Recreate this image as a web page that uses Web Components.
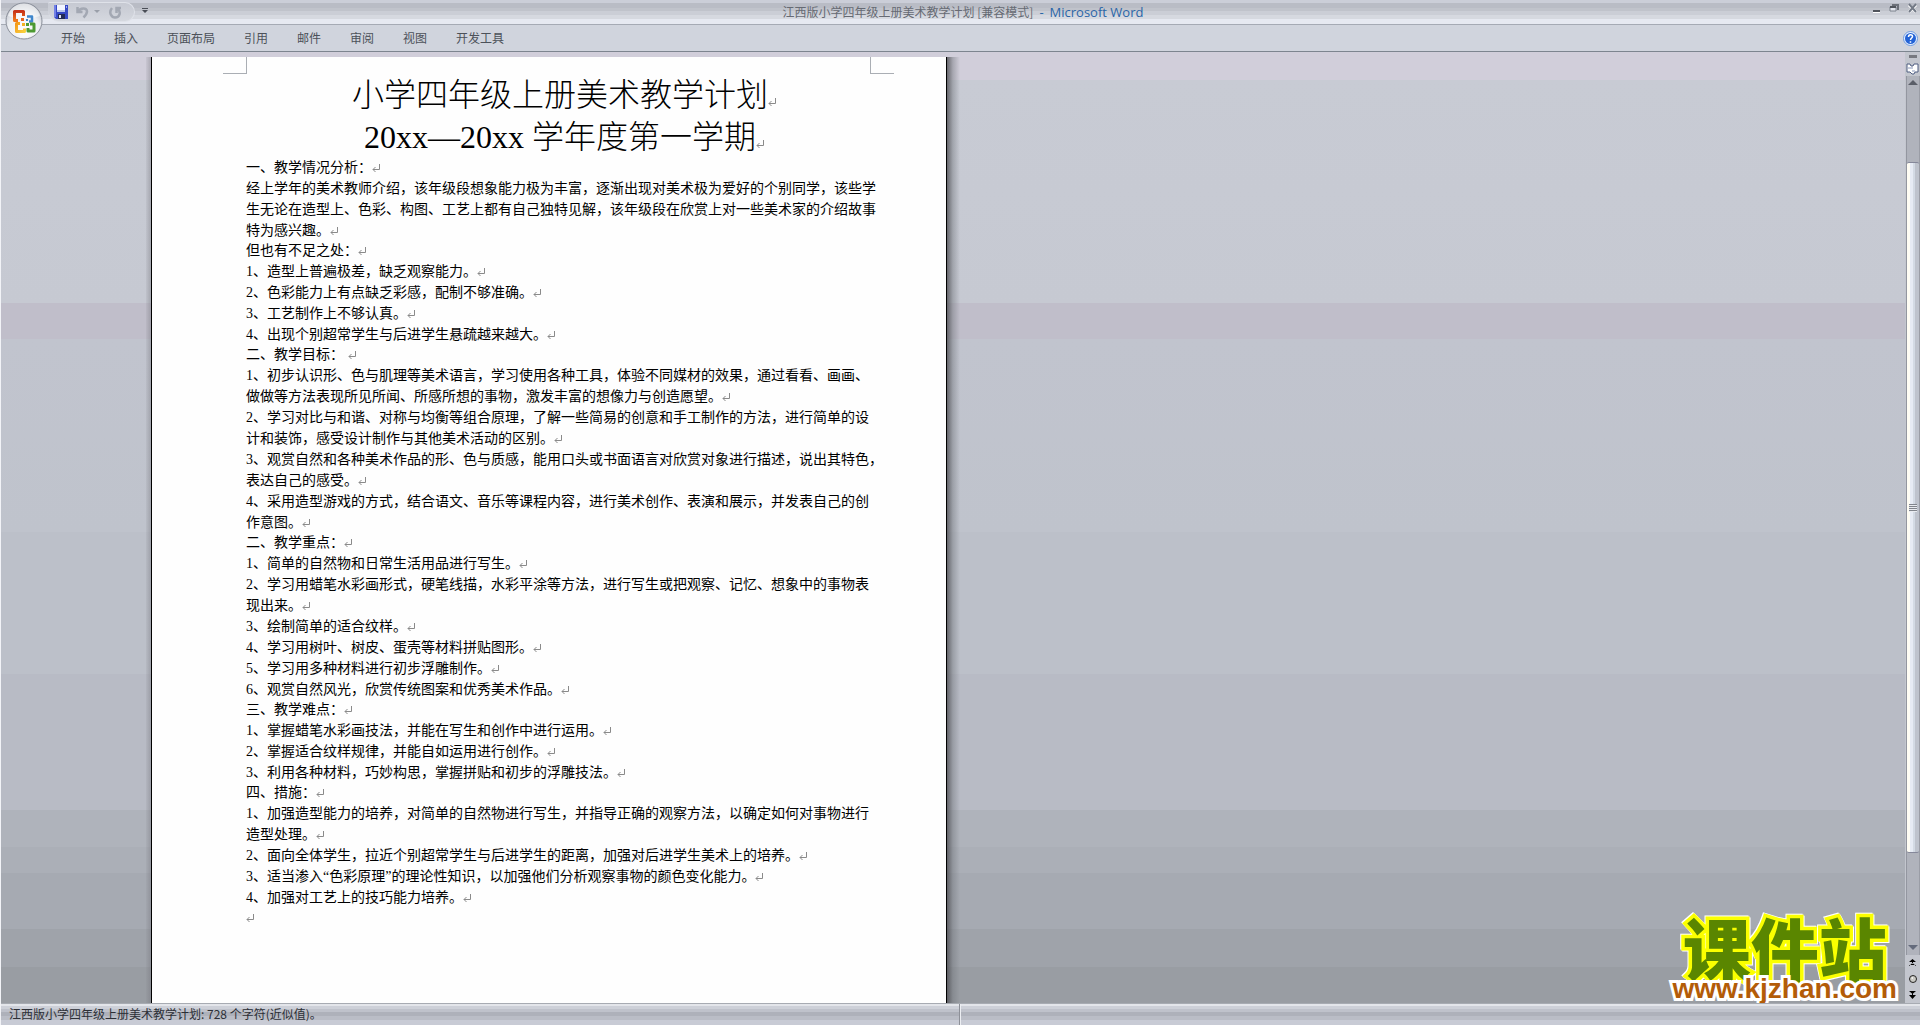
<!DOCTYPE html>
<html lang="zh-CN">
<head>
<meta charset="utf-8">
<title>江西版小学四年级上册美术教学计划 - Microsoft Word</title>
<style>
html, body { height: 100%; margin: 0; }
body { font-family: "Noto Sans CJK SC", sans-serif; overflow: hidden; }
</style>
</head>
<body>
<word-window>
  <word-titlebar slot="top">
    <span slot="doc">江西版小学四年级上册美术教学计划 [兼容模式]</span>
    <span slot="app">Microsoft Word</span>
  </word-titlebar>
  <word-ribbon slot="top">
    <ribbon-tab>开始</ribbon-tab>
    <ribbon-tab>插入</ribbon-tab>
    <ribbon-tab>页面布局</ribbon-tab>
    <ribbon-tab>引用</ribbon-tab>
    <ribbon-tab>邮件</ribbon-tab>
    <ribbon-tab>审阅</ribbon-tab>
    <ribbon-tab>视图</ribbon-tab>
    <ribbon-tab>开发工具</ribbon-tab>
  </word-ribbon>
  <word-page>
    <doc-para kind="title">小学四年级上册美术教学计划</doc-para>
    <doc-para kind="title">20xx—20xx 学年度第一学期</doc-para>
    <doc-para kind="head">一、教学情况分析：</doc-para>
    <doc-para>经上学年的美术教师介绍，该年级段想象能力极为丰富，逐渐出现对美术极为爱好的个别同学，该些学<br>生无论在造型上、色彩、构图、工艺上都有自己独特见解，该年级段在欣赏上对一些美术家的介绍故事<br>特为感兴趣。</doc-para>
    <doc-para kind="head">但也有不足之处：</doc-para>
    <doc-para>1、造型上普遍极差，缺乏观察能力。</doc-para>
    <doc-para>2、色彩能力上有点缺乏彩感，配制不够准确。</doc-para>
    <doc-para>3、工艺制作上不够认真。</doc-para>
    <doc-para>4、出现个别超常学生与后进学生悬疏越来越大。</doc-para>
    <doc-para kind="head">二、教学目标：&nbsp;</doc-para>
    <doc-para>1、初步认识形、色与肌理等美术语言，学习使用各种工具，体验不同媒材的效果，通过看看、画画、<br>做做等方法表现所见所闻、所感所想的事物，激发丰富的想像力与创造愿望。</doc-para>
    <doc-para>2、学习对比与和谐、对称与均衡等组合原理，了解一些简易的创意和手工制作的方法，进行简单的设<br>计和装饰，感受设计制作与其他美术活动的区别。</doc-para>
    <doc-para>3、观赏自然和各种美术作品的形、色与质感，能用口头或书面语言对欣赏对象进行描述，说出其特色，<br>表达自己的感受。</doc-para>
    <doc-para>4、采用造型游戏的方式，结合语文、音乐等课程内容，进行美术创作、表演和展示，并发表自己的创<br>作意图。</doc-para>
    <doc-para kind="head">二、教学重点：</doc-para>
    <doc-para>1、简单的自然物和日常生活用品进行写生。</doc-para>
    <doc-para>2、学习用蜡笔水彩画形式，硬笔线描，水彩平涂等方法，进行写生或把观察、记忆、想象中的事物表<br>现出来。</doc-para>
    <doc-para>3、绘制简单的适合纹样。</doc-para>
    <doc-para>4、学习用树叶、树皮、蛋壳等材料拼贴图形。</doc-para>
    <doc-para>5、学习用多种材料进行初步浮雕制作。</doc-para>
    <doc-para>6、观赏自然风光，欣赏传统图案和优秀美术作品。</doc-para>
    <doc-para kind="head">三、教学难点：</doc-para>
    <doc-para>1、掌握蜡笔水彩画技法，并能在写生和创作中进行运用。</doc-para>
    <doc-para>2、掌握适合纹样规律，并能自如运用进行创作。</doc-para>
    <doc-para>3、利用各种材料，巧妙构思，掌握拼贴和初步的浮雕技法。</doc-para>
    <doc-para kind="head">四、措施：</doc-para>
    <doc-para>1、加强造型能力的培养，对简单的自然物进行写生，并指导正确的观察方法，以确定如何对事物进行<br>造型处理。</doc-para>
    <doc-para>2、面向全体学生，拉近个别超常学生与后进学生的距离，加强对后进学生美术上的培养。</doc-para>
    <doc-para>3、适当渗入“色彩原理”的理论性知识，以加强他们分析观察事物的颜色变化能力。</doc-para>
    <doc-para>4、加强对工艺上的技巧能力培养。</doc-para>
    <doc-para kind="head"></doc-para>
  </word-page>
  <word-scrollbar slot="scroll"></word-scrollbar>
  <site-mark slot="mark"><span>课件站</span><span slot="url">www.kjzhan.com</span></site-mark>
  <word-status slot="bottom">江西版小学四年级上册美术教学计划: 728 个字符(近似值)。</word-status>
</word-window>

<script>
function define(name, html) {
  const t = document.createElement('template');
  t.innerHTML = html;
  customElements.define(name, class extends HTMLElement {
    constructor() {
      super();
      this.attachShadow({ mode: 'open' }).appendChild(t.content.cloneNode(true));
    }
  });
}

define('word-window', `
<style>
:host { display: flex; flex-direction: column; height: 100vh; box-sizing: border-box; border-left: 1px solid #f2f3f7; }
.work { flex: 1; min-height: 0; display: flex; position: relative; overflow: hidden;
  background: linear-gradient(#d1ceda 0 28px, #c8cbd4 28px, #c6c9d2 251px, #c0beca 251px 287px, #c1c4ce 287px, #bfc3cc 480px, #bcc0c9 480px 622px, #b8bbc5 622px 758px, #afb3bb 758px 795px, #abafb7 795px 821px, #a6aab2 821px 877px, #9fa3aa 877px 915px, #999da3 915px); }
.canvas { flex: 1; min-width: 0; display: flex; padding: 5px 0 0 150px; overflow: hidden; }
</style>
<slot name="top"></slot>
<main class="work"><div class="canvas"><slot></slot></div><slot name="scroll"></slot><slot name="mark"></slot></main>
<slot name="bottom"></slot>`);

define('word-titlebar', `
<style>
:host { display: grid; grid-template-columns: 1fr auto 1fr; height: 24px; border-bottom: 1px solid #a5aab4; position: relative; z-index: 2;
  background: linear-gradient(#cbced8 0 3px, #b9bcc5 3px 8px, #c0c3cb 8px 11px, #cbced6 11px 15px, #d6d9e0 15px 19px, #e6e9f1 19px); }
button { border: 0; padding: 0; margin: 0; background: none; display: flex; }
.left { display: flex; align-items: flex-start; padding-left: 3px; }
.orb { margin-top: 1px; height: 40px; }
.qat { display: flex; align-items: center; height: 20px; box-sizing: border-box; margin: 2px 0 0 4px; padding-left: 6px; width: 87px;
  border: 1px solid #dfe2e9; border-left: 0; border-radius: 2px 10px 10px 12px; background: linear-gradient(#c6c9d2, #d5d8df); }
.undo { margin-left: 8px; } .c { margin-left: 5px; } .redo { margin-left: 9px; }
.more { margin: 8px 0 0 7px; }
.name { display: flex; gap: 6px; font-size: 12px; line-height: 20px; padding: 2px 0 0 5px; color: #666a73; white-space: nowrap; }
.app { color: #2a66a8; font-family: "Open Sans", sans-serif; font-size: 13px; }
.right { display: flex; justify-content: flex-end; align-items: flex-start; gap: 8px; padding: 3px 2px 0 0; }
</style>
<div class="left">
<button class="orb" aria-label="Office"><svg width="40" height="40" viewBox="0 0 40 40">
<defs><radialGradient id="g" cx=".5" cy=".75" r=".75"><stop offset="0" stop-color="#fff"/><stop offset=".6" stop-color="#eceef2"/><stop offset="1" stop-color="#b4b8c2"/></radialGradient>
<linearGradient id="o" x2="0" y2="1"><stop offset="0" stop-color="#c8341a"/><stop offset="1" stop-color="#f07a1c"/></linearGradient>
<linearGradient id="y" x2="1" y2="1"><stop offset="0" stop-color="#f49a1c"/><stop offset="1" stop-color="#f8cf3c"/></linearGradient></defs>
<circle cx="20" cy="20" r="18" fill="url(#g)" stroke="#8a8f9a"/>
<path d="M4 15a16.500 16.500 0 0 1 32 0q-16 6-32 0z" fill="#fff" opacity=".55"/>
<g fill="none" stroke-linejoin="round">
<path d="M14 19.500H10.500V10.500H19.500V15" stroke="url(#o)" stroke-width="3"/>
<path d="M23 15.500h5V20.500H25" stroke="#3f86cc" stroke-width="2.500"/>
<path d="M16 22.500h-3.500V30.500H20.500v-3" stroke="url(#y)" stroke-width="3"/>
<path d="M26 23h4v7h-6v-3" stroke="#4d9a32" stroke-width="3"/></g>
<rect x="17" y="17" width="3" height="3" fill="#e8641c"/><rect x="18" y="22" width="3" height="3" fill="#f3b124"/><rect x="22" y="18" width="2" height="2" fill="#3f86cc"/><rect x="22" y="22" width="3" height="3" fill="#4d9a32"/></svg></button>
<div class="qat">
<button aria-label="保存"><svg width="14" height="14" viewBox="0 0 14 14"><path d="M0 0h14v14H2l-2-2z" fill="#3548c4"/><path d="M0 0h2v12H0z" fill="#7280e6"/><path d="M3 0h8v7H3z" fill="#f2f5ff"/><path d="M3 5h8v2H3z" fill="#b9c6ec"/><path d="M4 9h7v5H4z" fill="#222a55"/><path d="M5 10h2v3H5z" fill="#dfe4f4"/><path d="M12 1h1v2h-1z" fill="#9aa6f4"/></svg></button>
<button class="undo" aria-label="撤消"><svg width="13" height="13" viewBox="0 0 13 13" fill="none" stroke="#a3a8b3" stroke-width="2.500"><path d="M1.500 1v5h5M2 5.500C4 2 11 1 11 5.500c0 2.500-1.500 4-3.500 6"/></svg></button>
<button class="c" aria-label="撤消列表"><svg width="6" height="4"><path d="M0 0h6L3 3z" fill="#9a9fa9"/></svg></button>
<button class="redo" aria-label="恢复"><svg width="13" height="13" viewBox="0 0 13 13" fill="none" stroke="#a3a8b3" stroke-width="2.500"><path d="M3 2C-1 7 3 11.500 6 11.500c5 0 6-5.500 3-8.500M7.500 7V2H12"/></svg></button>
</div>
<button class="more" aria-label="自定义快速访问工具栏"><svg width="6" height="6"><path d="M0 0h6v1H0zM0 2h6L3 5z" fill="#4a4e57"/></svg></button>
</div>
<div class="name"><slot name="doc"></slot><span class="app">-</span><span class="app"><slot name="app"></slot></span></div>
<div class="right">
<button aria-label="最小化"><svg width="10" height="11"><path d="M2 7h7v2H2z" fill="#50545c"/><path d="M2 9h7v1H2z" fill="#fff"/></svg></button>
<button aria-label="还原"><svg width="10" height="11"><path d="M3 1h7v6H8V3H3z" fill="#6c7079"/><path d="M1 4h6v4H1z" fill="#e3e6ee" stroke="#7d828c"/><path d="M1 3h6v2H1z" fill="#50545c"/></svg></button>
<button aria-label="关闭"><svg width="11" height="11"><path d="M2 2l7 7M9 2L2 9" stroke="#fff" stroke-width="3"/><path d="M2 1l7 8M9 1L2 9" stroke="#737a87" stroke-width="2"/></svg></button>
</div>`);

define('word-ribbon', `
<style>
:host { display: flex; align-items: center; height: 26px; border-bottom: 1px solid #7d858f; background: #d0d4dd; }
nav { flex: 1; display: flex; gap: 29px; padding-left: 60px; }
button { border: 0; padding: 0; margin: 0 2px 0 0; background: none; display: flex; }
</style>
<nav><slot></slot></nav>
<button aria-label="帮助"><svg width="15" height="15" viewBox="0 0 15 15"><circle cx="7.500" cy="7.500" r="7" fill="#eaf2ff" stroke="#6f9ade"/><circle cx="7.500" cy="7.500" r="5.500" fill="#2463d6"/><path d="M5.500 6c0-3 4-3 4-.5C9.500 7 7.500 7 7.500 9M7.500 10.300v1.400" fill="none" stroke="#fff" stroke-width="1.500"/></svg></button>`);

define('ribbon-tab', `
<style>
:host { display: block; }
button { border: 0; padding: 0; background: none; font: inherit; font-size: 12px; line-height: 20px; color: #4c5159; display: block; white-space: nowrap; }
</style><button><slot></slot></button>`);

define('word-page', `
<style>
:host { display: flex; flex-direction: column; width: 794px; background: #fefefe; border: solid #000; border-width: 0 1px; align-self: stretch; flex: none;
  position: relative; color: #000; }
:host::before, :host::after { content: ""; position: absolute; top: 0; bottom: 0; }
:host::before { right: 100%; width: 5px; margin-right: 1px; background: linear-gradient(90deg, #8080881a, #70707866); }
:host::after { left: 100%; width: 13px; margin-left: 1px; background: linear-gradient(90deg, #505055d0, #70747a70 45%, #a0a4b000); }
.crop { display: flex; justify-content: space-between; padding: 0 52px 0 71px; height: 17px; }
.crop i { width: 23px; height: 16px; border: solid #aaaeb4; border-width: 0 1px 1px 0; }
.crop i + i { border-width: 0 0 1px 1px; }
article { padding: 0 0 0 94px; }
</style>
<div class="crop"><i></i><i></i></div>
<article><slot></slot></article>`);

define('doc-para', `
<style>
:host { display: block; width: 624px; font: 14px/21px "Liberation Serif", "Noto Sans CJK SC", serif; white-space: nowrap; }
:host([kind="head"]) { line-height: 20px; min-height: 20px; }
:host([kind="title"]) { font-size: 32px; line-height: 42px; text-align: center; font-weight: 300; padding-left: 6px; }
svg { vertical-align: 0; }
</style><slot></slot><svg width="8" height="8" viewBox="0 0 8 8"><path d="M7.500 0v5.500H1M3.500 3L1 5.500 3.500 8" fill="none" stroke="#8a8a8a"/></svg>`);

define('word-scrollbar', `
<style>
:host { display: flex; flex-direction: column; align-items: center; width: 15px; background: #c3c6ce; padding-top: 3px; box-sizing: border-box; }
button { border: 0; padding: 0; margin: 0; background: none; display: flex; justify-content: center; align-items: center; width: 13px; }
button.split { width: 8px; height: 3px; background: #777980; margin-bottom: 2px; }
.ruler { height: 16px; }
.track { flex: 1; display: flex; flex-direction: column; width: 12px; border-left: 1px solid #9396a0; border-right: 1px solid #9a9da6; background: #b0b3bc; }
.track button { width: 12px; height: 14px; }
.room { flex: 1; display: flex; flex-direction: column; padding: 72px 0 88px; }
.thumb { flex: 1; display: flex; align-items: center; justify-content: center; border: 1px solid #85889a; border-width: 1px 0; border-radius: 2px;
  background: linear-gradient(90deg, #fffdf4 0 3px, #e6ebf4 3px 6px, #d3dae4 6px 8px, #bec3cd 8px); }
.thumb i { width: 8px; height: 8px; background: repeating-linear-gradient(#80848c 0 1px, #e8ebf0 1px 2px); }
.page { height: 16px; }
</style>
<button class="split" aria-label="拆分"></button>
<button class="ruler" aria-label="标尺"><svg width="13" height="13"><path d="M1 2h3l1 2h2l1-2h4v8H9l-1 2H6l-2-2H1z" fill="#fff" stroke="#4f5d80"/><path d="M2 6h5M6 9h3" stroke="#8a97b8"/></svg></button>
<div class="track">
<button aria-label="向上"><svg width="10" height="6"><path d="M0 5h10L5 0z" fill="#5a5e68"/></svg></button>
<div class="room"><div class="thumb"><i></i></div></div>
<button aria-label="向下"><svg width="10" height="6"><path d="M0 0h10L5 5z" fill="#646b7c"/></svg></button>
</div>
<button class="page" aria-label="前一页"><svg width="7" height="8"><path d="M0 3h7L3.500 0zM3 3h1v2H3zM0 7h7L3.500 4zM0 6h7v1H0z"/></svg></button>
<button class="page" aria-label="选择浏览对象"><svg width="8" height="8"><circle cx="4" cy="4" r="3.500" fill="#c9c9c4" stroke="#222"/><path d="M2 3l2-1v2z" fill="#fff"/></svg></button>
<button class="page" aria-label="下一页"><svg width="7" height="8"><path d="M0 0h7L3.500 3zM0 4h7L3.500 8zM3 2h1v3H3z"/></svg></button>`);

define('site-mark', `
<style>
:host { display: flex; flex-direction: column; align-items: center; position: absolute; right: 23px; bottom: 0; white-space: nowrap; }
.cn { font: 900 68px/56px "Noto Sans CJK SC", sans-serif; color: #5a8600; -webkit-text-stroke: 7px #fbff00; paint-order: stroke fill;
  filter: drop-shadow(1px 1px 0 #fff) drop-shadow(-1px -1px 0 #fff); }
.url { font: 700 28px/28px "Liberation Sans", sans-serif; color: #b35c08; -webkit-text-stroke: 6px #fff; paint-order: stroke fill; position: relative; }
</style><div class="cn"><slot></slot></div><div class="url"><slot name="url"></slot></div>`);

define('word-status', `
<style>
:host { display: flex; height: 22px; box-sizing: border-box; border-top: 1px solid #a7abb2; font-size: 12px; line-height: 20px; color: #2c2f36;
  background: linear-gradient(#e3e5ea 0 2px, #cdd0d8 2px 5px, #bfc2cb 5px 8px, #aeb1ba 8px 12px, #babdc6 12px 16px, #c8cbd5 16px); }
div { width: 950px; padding-left: 8px; border-right: 1px solid #8d9098; box-shadow: 1px 0 #eceef2; white-space: nowrap; }
</style><div><slot></slot></div>`);
</script>
</body>
</html>
